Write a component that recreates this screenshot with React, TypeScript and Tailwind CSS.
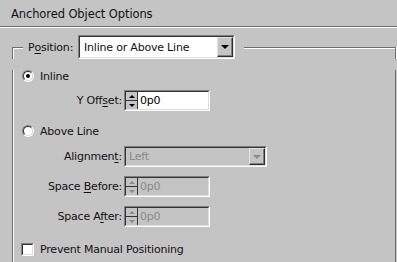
import type { ReactNode } from "react";

const DARK = "border-[#6e6e6e]";

function U({ children }: { children: ReactNode }) {
  return <span className="underline decoration-1 underline-offset-[2px]">{children}</span>;
}

function Sunken({ className, children }: { className: string; children: ReactNode }) {
  return (
    <div className={`border border-t-[#808080] border-l-[#808080] border-b-white border-r-white ${className}`}>
      <div className="flex h-full w-full border border-t-[#333] border-l-[#333] border-b-[#dedede] border-r-[#dedede]">
        {children}
      </div>
    </div>
  );
}

function Tri({ up, disabled }: { up?: boolean; disabled?: boolean }) {
  const color = disabled ? "border-b-[#8a8a8a]" : "border-b-black";
  const colorDown = disabled ? "border-t-[#8a8a8a]" : "border-t-black";
  return up ? (
    <div className={`h-0 w-0 border-x-[3px] border-b-[3px] border-x-transparent ${color}`} />
  ) : (
    <div className={`h-0 w-0 border-x-[3px] border-t-[3px] border-x-transparent ${colorDown}`} />
  );
}

function DropButton({ disabled }: { disabled?: boolean }) {
  return (
    <div className="flex w-[16px] items-center justify-center border border-t-[#e4e4e4] border-l-[#e4e4e4] border-b-[#303030] border-r-[#303030] bg-[#c4c4c4] shadow-[inset_-1px_-1px_0_#808080]">
      <div
        className={`h-0 w-0 border-x-[4px] border-t-[4px] border-x-transparent ${
          disabled ? "border-t-[#8a8a8a]" : "border-t-black"
        }`}
      />
    </div>
  );
}

function Spinner({ value, disabled }: { value: string; disabled?: boolean }) {
  return (
    <Sunken className="h-[21px] w-[86px]">
      <div className="flex w-[12px] flex-col border-r border-[#333] bg-[#c4c4c4]">
        <div className="flex flex-1 items-center justify-center border-b border-[#333]">
          <Tri up disabled={disabled} />
        </div>
        <div className="flex flex-1 items-center justify-center">
          <Tri disabled={disabled} />
        </div>
      </div>
      <div
        className={`flex flex-1 items-center pl-[2px] ${
          disabled ? "bg-[#c4c4c4] text-[#8a8a8a]" : "bg-white text-black"
        }`}
      >
        {value}
      </div>
    </Sunken>
  );
}

function Radio({ checked, label }: { checked?: boolean; label: string }) {
  return (
    <div className="flex h-[12px] items-center">
      <div className="flex h-[12px] w-[12px] items-center justify-center rounded-full border border-t-[#808080] border-l-[#808080] border-b-white border-r-white">
        <div className="flex h-[10px] w-[10px] items-center justify-center rounded-full border border-t-[#333] border-l-[#333] border-b-[#dedede] border-r-[#dedede] bg-white">
          {checked && <div className="h-[4px] w-[4px] rounded-full bg-black" />}
        </div>
      </div>
      <span className="ml-[6px]">{label}</span>
    </div>
  );
}

function Field({ label, children, top }: { label: ReactNode; children: ReactNode; top: string }) {
  return (
    <div className={`flex items-center ${top}`}>
      <div className="w-[100px] text-right">{label}</div>
      <div className="ml-[2px]">{children}</div>
    </div>
  );
}

export default function App() {
  return (
    <div className="h-[262px] w-[397px] overflow-hidden bg-[#c4c4c4] font-['DejaVu_Sans',sans-serif] text-[11px] leading-[13px] tracking-[-0.2px] text-[#111]">
      <div className="h-[26px] pl-[11px] pt-[8px] text-[11.5px] tracking-[-0.1px]">Anchored Object Options</div>
      <div className={`h-[2px] border-t border-b border-b-white ${DARK}`} />

      <div className="mt-[7px] flex h-[24px] items-stretch pl-[12px]">
        <div className={`h-[12px] w-[11px] self-end border-l border-t ${DARK} shadow-[inset_1px_1px_0_#fff]`} />
        <div className="ml-[5px] flex w-[50px] items-center">
          P<U>o</U>sition:
        </div>
        <Sunken className="h-[24px] w-[157px]">
          <div className="flex flex-1 items-center bg-white pl-[4px]">Inline or Above Line</div>
          <DropButton />
        </Sunken>
        <div className={`ml-[9px] h-[12px] flex-1 self-end border-t border-r ${DARK} shadow-[inset_0_1px_0_#fff]`} />
        <div className="h-[12px] w-[1px] self-end bg-white" />
      </div>

      <div className={`mr-[1px] ml-[12px] h-[220px] border-l border-r ${DARK} pl-[9px] shadow-[inset_1px_0_0_#fff]`}>
        <div className="mt-[11px]">
          <Radio checked label="Inline" />
        </div>
        <Field
          top="mt-[8px]"
          label={
            <>
              Y Off<U>s</U>et:
            </>
          }
        >
          <Spinner value="0p0" />
        </Field>
        <div className="mt-[14px]">
          <Radio label="Above Line" />
        </div>
        <Field
          top="mt-[9px]"
          label={
            <>
              Alignmen<U>t</U>:
            </>
          }
        >
          <Sunken className="h-[21px] w-[143px]">
            <div className="flex flex-1 items-center bg-[#c4c4c4] pl-[3px] text-[#8a8a8a]">Left</div>
            <DropButton disabled />
          </Sunken>
        </Field>
        <Field
          top="mt-[9px]"
          label={
            <>
              Space <U>B</U>efore:
            </>
          }
        >
          <Spinner value="0p0" disabled />
        </Field>
        <Field
          top="mt-[9px]"
          label={
            <>
              Space A<U>f</U>ter:
            </>
          }
        >
          <Spinner value="0p0" disabled />
        </Field>
        <div className="mt-[16px] ml-[-1px] flex items-center">
          <div className="h-[13px] w-[13px] border border-t-[#808080] border-l-[#808080] border-b-white border-r-white">
            <div className="h-full w-full border border-t-[#333] border-l-[#333] border-b-[#dedede] border-r-[#dedede] bg-white" />
          </div>
          <span className="ml-[6px]">Prevent Manual Positioning</span>
        </div>
      </div>
    </div>
  );
}
